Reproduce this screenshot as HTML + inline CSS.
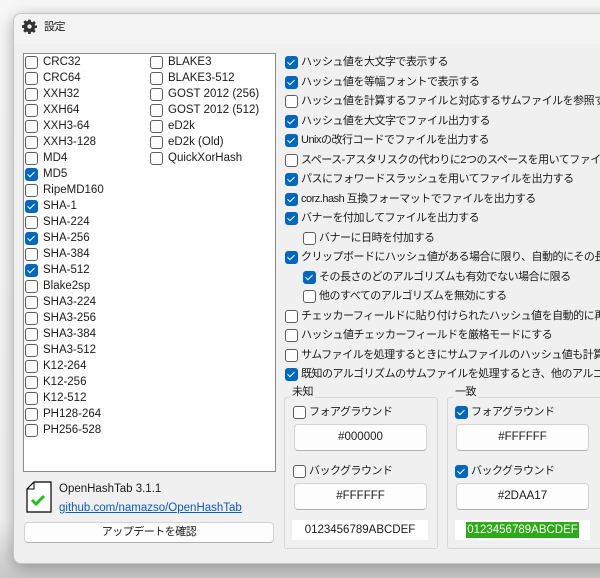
<!DOCTYPE html>
<html><head><meta charset="utf-8"><style>
*{box-sizing:border-box;margin:0;padding:0}
html,body{width:600px;height:578px;overflow:hidden}
body{position:relative;background:linear-gradient(#f7f7f7 0,#f2f2f2 520px,#c8c8c8 578px);font-family:"Segoe UI","Liberation Sans","Noto Sans CJK JP",sans-serif;font-size:11.5px;color:#1a1a1a}
#clip{position:absolute;left:0;top:0;width:600px;height:578px;overflow:hidden}
.win{position:absolute;left:13px;top:13px;width:620px;height:551px;background:#f0f0f0;border:1px solid #c4c4c4;border-radius:8px;box-shadow:0 4px 16px rgba(0,0,0,.3);overflow:hidden}
.title{position:absolute;left:0;top:0;right:0;height:30px;background:#f3f3f3}
.a{position:absolute;white-space:nowrap;line-height:16px}
.j{font-size:11px;letter-spacing:-0.5px}
.cb{position:absolute;width:13px;height:13px;border:1px solid #5d5d5d;border-radius:3px;background:#fdfdfd}
.cb.on{background:#0067c0;border-color:#0067c0}
.cb.on:after{content:"";position:absolute;left:3px;top:1px;width:3px;height:6px;border:solid #fff;border-width:0 1.3px 1.3px 0;transform:rotate(45deg)}
.list{position:absolute;left:23px;top:53px;width:253px;height:419px;background:#fff;border:1px solid #8a8a8a}
.grp{position:absolute;border:1px solid #d6d6d6;border-radius:3px}
.gt{position:absolute;background:#f0f0f0;padding:0 2px;line-height:14px}
.tb{position:absolute;height:27px;background:#fdfdfd;border:1px solid #d3d3d3;border-bottom-color:#b0b0b0;border-radius:4px;text-align:center;line-height:25px}
.smp{position:absolute;height:20px;background:#fff;text-align:center;line-height:20px}
</style></head><body><div id="clip">
<div class="win"><div class="title"></div></div>
<svg style="position:absolute;left:22px;top:19px" width="15" height="15" viewBox="0 0 24 24"><path fill="#333" d="M10 1h4l.6 3.2 2 .9 2.7-1.9 2.8 2.8-1.9 2.7.9 2L24 10v4l-3.2.6-.9 2 1.9 2.7-2.8 2.8-2.7-1.9-2 .9L14 24h-4l-.6-3.2-2-.9-2.7 1.9-2.8-2.8 1.9-2.7-.9-2L0 14v-4l3.2-.6.9-2L2.2 4.7 5 1.9l2.7 1.9 2-.9z"/><circle cx="12" cy="12" r="3.5" fill="#f3f3f3"/></svg>
<div class="a j" style="left:44px;top:19px">設定</div>
<div class="list"></div>
<div id="L"></div>
<div id="R"></div>
<svg style="position:absolute;left:26px;top:481px" width="26" height="32" viewBox="0 0 26 32"><path d="M8 1H25V31H1V8Z" fill="#fff" stroke="#000" stroke-width="1.2"/><path d="M1 8H8V1" fill="none" stroke="#000" stroke-width="1"/><path d="M6 19l4 4 8-8" fill="none" stroke="#1bc41b" stroke-width="3"/></svg>
<div class="a" style="left:59px;top:481px">OpenHashTab 3.1.1</div>
<div class="a" style="left:59px;top:500px;color:#0a5bc4;text-decoration:underline">github.com/namazso/OpenHashTab</div>
<div class="tb j" style="left:24px;top:522px;width:250px;height:21px;line-height:19px">アップデートを確認</div>
<div class="grp" style="left:284px;top:397px;width:154px;height:152px"></div>
<div class="gt j" style="left:290px;top:385px">未知</div>
<div class="cb" style="left:293px;top:406px"></div><div class="a j" style="left:309px;top:404px">フォアグラウンド</div>
<div class="tb" style="left:294px;top:424px;width:133px">#000000</div>
<div class="cb" style="left:293px;top:465px"></div><div class="a j" style="left:309px;top:463px">バックグラウンド</div>
<div class="tb" style="left:294px;top:483px;width:133px">#FFFFFF</div>
<div class="smp" style="left:292px;top:520px;width:136px">0123456789ABCDEF</div>
<div class="grp" style="left:447px;top:397px;width:160px;height:152px"></div>
<div class="gt j" style="left:453px;top:385px">一致</div>
<div class="cb on" style="left:455px;top:406px"></div><div class="a j" style="left:471px;top:404px">フォアグラウンド</div>
<div class="tb" style="left:456px;top:424px;width:133px">#FFFFFF</div>
<div class="cb on" style="left:455px;top:465px"></div><div class="a j" style="left:471px;top:463px">バックグラウンド</div>
<div class="tb" style="left:456px;top:483px;width:133px">#2DAA17</div>
<div class="smp" style="left:455px;top:520px;width:135px"><span style="background:#2daa17;color:#fff;padding:2px 1px">0123456789ABCDEF</span></div>
</div>
<script>
var l1=[["CRC32",0],["CRC64",0],["XXH32",0],["XXH64",0],["XXH3-64",0],["XXH3-128",0],["MD4",0],["MD5",1],["RipeMD160",0],["SHA-1",1],["SHA-224",0],["SHA-256",1],["SHA-384",0],["SHA-512",1],["Blake2sp",0],["SHA3-224",0],["SHA3-256",0],["SHA3-384",0],["SHA3-512",0],["K12-264",0],["K12-256",0],["K12-512",0],["PH128-264",0],["PH256-528",0]];
var l2=["BLAKE3","BLAKE3-512","GOST 2012 (256)","GOST 2012 (512)","eD2k","eD2k (Old)","QuickXorHash"];
var h="";
l1.forEach(function(e,i){var y=54+i*16;h+='<div class="cb'+(e[1]?' on':'')+'" style="left:25px;top:'+(y+2)+'px"></div><div class="a" style="left:43px;top:'+y+'px">'+e[0]+'</div>';});
l2.forEach(function(e,i){var y=54+i*16;h+='<div class="cb" style="left:150px;top:'+(y+2)+'px"></div><div class="a" style="left:168px;top:'+y+'px">'+e+'</div>';});
document.getElementById("L").innerHTML=h;
var r=[["ハッシュ値を大文字で表示する",1,0],["ハッシュ値を等幅フォントで表示する",1,0],["ハッシュ値を計算するファイルと対応するサムファイルを参照する",0,0],["ハッシュ値を大文字でファイル出力する",1,0],["Unixの改行コードでファイルを出力する",1,0],["スペース-アスタリスクの代わりに2つのスペースを用いてファイルを出力する",0,0],["パスにフォワードスラッシュを用いてファイルを出力する",1,0],["corz.hash 互換フォーマットでファイルを出力する",1,0],["バナーを付加してファイルを出力する",1,0],["バナーに日時を付加する",0,1],["クリップボードにハッシュ値がある場合に限り、自動的にその長さのアルゴリズムを有効にする",1,0],["その長さのどのアルゴリズムも有効でない場合に限る",1,1],["他のすべてのアルゴリズムを無効にする",0,1],["チェッカーフィールドに貼り付けられたハッシュ値を自動的に再フォーマットする",0,0],["ハッシュ値チェッカーフィールドを厳格モードにする",0,0],["サムファイルを処理するときにサムファイルのハッシュ値も計算する",0,0],["既知のアルゴリズムのサムファイルを処理するとき、他のアルゴリズムを無効にする",1,0]];
h="";
r.forEach(function(e,i){var y=Math.round(54+i*19.5);var x=e[2]?303:285;h+='<div class="cb'+(e[1]?' on':'')+'" style="left:'+x+'px;top:'+(y+2)+'px"></div><div class="a j" style="left:'+(x+16)+'px;top:'+y+'px">'+e[0]+'</div>';});
document.getElementById("R").innerHTML=h;
</script>
</body></html>
